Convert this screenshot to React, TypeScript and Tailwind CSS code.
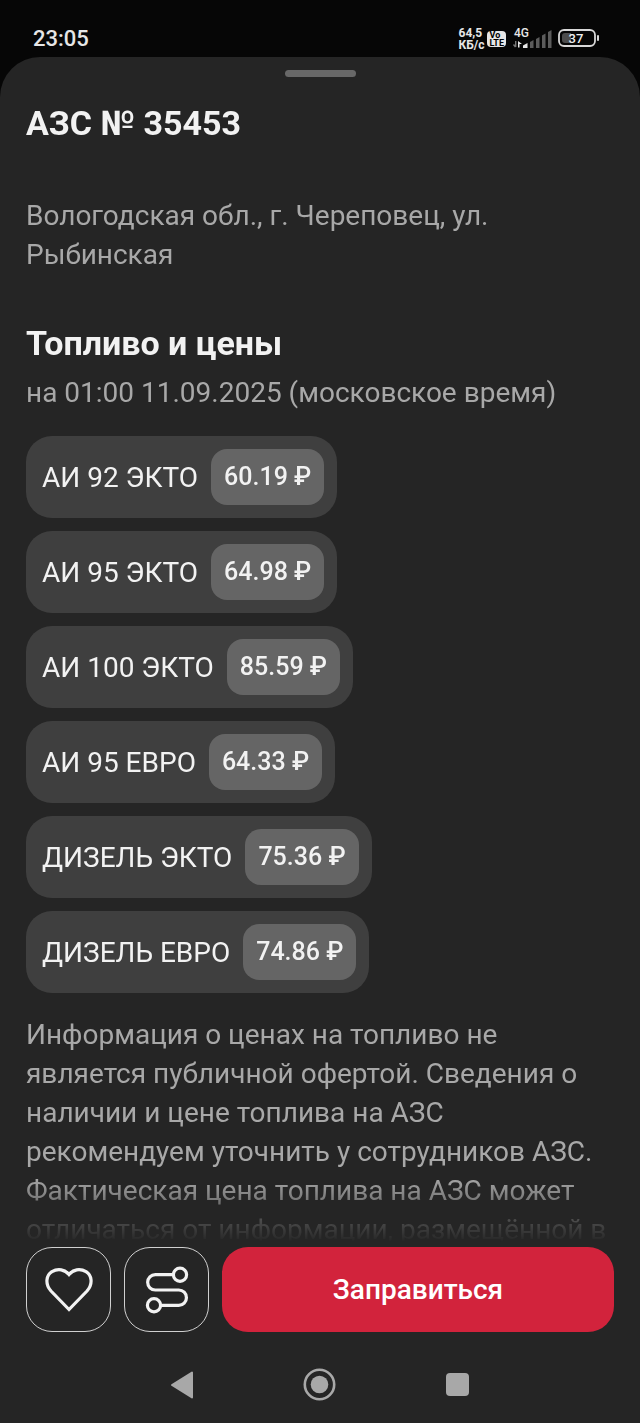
import { useState } from "react";

const fuels = [
  { name: "АИ 92 ЭКТО", price: "60.19" },
  { name: "АИ 95 ЭКТО", price: "64.98" },
  { name: "АИ 100 ЭКТО", price: "85.59" },
  { name: "АИ 95 ЕВРО", price: "64.33" },
  { name: "ДИЗЕЛЬ ЭКТО", price: "75.36" },
  { name: "ДИЗЕЛЬ ЕВРО", price: "74.86" },
];

function SignalIcon() {
  return (
    <svg width="40" height="24" viewBox="0 0 40 24" aria-hidden="true">
      <text x="2" y="10" fontSize="12" fontWeight="500" fill="#e6e6e6">
        4G
      </text>
      <path d="M3.700 14v6M1.500 17.500l2 2.500" fill="none" stroke="#777" strokeWidth="1.400" />
      <path d="M6 14v6.500h1.500v-3.500h2.500z" fill="#e6e6e6" />
      <path d="M11 21v-2.500l4.500-2.500v5z" fill="#e6e6e6" />
      <path
        d="M18 21v-6l3.500-2v8zM24 21v-9l3.500-2v11zM30 21v-12.500l3.500-2v14.500zM36 21v-16l3.500-2v18z"
        fill="#5c5c5c"
      />
    </svg>
  );
}

function BatteryIcon() {
  return (
    <svg width="42" height="20" viewBox="0 0 42 20" aria-hidden="true">
      <rect x="1" y="1" width="36" height="16" rx="5" fill="none" stroke="#d8d8d8" strokeWidth="1.800" />
      <path d="M13 4H7Q4 4 4 7v4q0 3 3 3h6z" fill="#4c4c4c" />
      <path d="M40 7v4" stroke="#d8d8d8" strokeWidth="2" strokeLinecap="round" />
      <text x="18" y="14" textAnchor="middle" fontSize="13" fontWeight="500" fill="#f0f0f0">
        37
      </text>
    </svg>
  );
}

function StatusBar() {
  return (
    <header className="flex h-[57px] shrink-0 items-center justify-between pt-5 pr-10 pl-[33px] text-[#e6e6e6]">
      <time className="text-[22px] leading-6 font-medium">23:05</time>
      <div className="flex items-center gap-[3px]">
        <div className="text-xs leading-3 font-bold">
          <span className="block">64,5</span>
          <span className="block">КБ/с</span>
        </div>
        <div className="rounded-sm bg-[#e6e6e6] px-[2px] text-[9px] leading-2 font-bold text-black">
          <span className="block">Vo</span>
          <span className="block">LTE</span>
        </div>
        <div className="mx-[3px]">
          <SignalIcon />
        </div>
        <BatteryIcon />
      </div>
    </header>
  );
}

function FuelChip({ name, price }: { name: string; price: string }) {
  return (
    <li className="flex w-fit items-center gap-[13px] rounded-[26px] bg-[#3f3f3f] py-[13px] pr-[13px] pl-4 text-[#f2f2f2]">
      <span className="text-[28px] leading-[39px]">{name}</span>
      <span className="rounded-2xl bg-[#656565] px-[13px] text-[25px] leading-[56px] font-medium">
        {price} ₽
      </span>
    </li>
  );
}

export default function App() {
  const [favorite, setFavorite] = useState(false);

  return (
    <div className="flex h-screen flex-col bg-[#060606] font-[Roboto,sans-serif]">
      <StatusBar />
      <div className="flex min-h-0 flex-1 flex-col rounded-t-[40px] bg-[#252525] pt-[13px]">
        <div className="mx-auto h-[7px] w-[71px] shrink-0 rounded-full bg-[#686868]" />

        <main className="min-h-0 flex-1 overflow-hidden px-[26px] pt-[26px] text-[28px] leading-[39px] text-[#a8a8a8] [mask-image:linear-gradient(to_bottom,black_calc(100%-64px),rgba(0,0,0,0.3)_calc(100%-22px),transparent)]">
          <h1 className="text-[34px] leading-10 font-bold text-[#f2f2f2]">АЗС № 35453</h1>
          <address className="mt-[53px] not-italic">
            Вологодская обл., г. Череповец, ул. Рыбинская
          </address>

          <h2 className="mt-[49px] text-[34px] leading-10 font-bold text-[#f2f2f2]">
            Топливо и цены
          </h2>
          <p className="mt-[10px]">на 01:00 11.09.2025 (московское время)</p>

          <ul className="mt-6 mb-[22px] space-y-[13px]">
            {fuels.map((fuel) => (
              <FuelChip key={fuel.name} name={fuel.name} price={fuel.price} />
            ))}
          </ul>

          <p>
            Информация о ценах на топливо не является публичной офертой. Сведения о
            наличии и цене топлива на АЗС рекомендуем уточнить у сотрудников АЗС.
            Фактическая цена топлива на АЗС может отличаться от информации,
            размещённой в
          </p>
        </main>

        <div className="flex shrink-0 gap-[13px] px-[26px] pt-[5px] pb-[14px]">
          <button
            className="grid size-[85px] place-items-center rounded-[26px] border border-[#d0d0d0] text-[#f2f2f2]"
            aria-label="В избранное"
            aria-pressed={favorite}
            onClick={() => setFavorite(!favorite)}
          >
            <svg width="48" height="44" viewBox="0 0 48 44" fill={favorite ? "currentColor" : "none"} stroke="currentColor" strokeWidth="3.200">
              <path d="M24 41.500 6 23C-.5 15.500 1.500 7 7 3.700 13 0 20 1.500 24 6.500 28 1.500 35 0 41 3.700 46.500 7 48.500 15.500 42 23z" />
            </svg>
          </button>
          <button
            className="grid size-[85px] place-items-center rounded-[26px] border border-[#d0d0d0] text-[#f2f2f2]"
            aria-label="Маршрут"
          >
            <svg width="44" height="48" viewBox="0 0 44 48" fill="none" stroke="currentColor" strokeWidth="3.200">
              <circle cx="35" cy="8.700" r="6.600" />
              <circle cx="9" cy="39.300" r="6.600" />
              <path d="M28.400 8.700H10.300a7.650 7.650 0 0 0 0 15.300h23.500a7.650 7.650 0 0 1 0 15.300H15.600" />
            </svg>
          </button>
          <button className="flex-1 rounded-[26px] bg-[#d2233c] text-[28px] font-medium text-white">
            Заправиться
          </button>
        </div>

        <nav className="flex h-[77px] shrink-0 items-center justify-center gap-[92px] text-[#a8a8a8]">
          <button className="grid w-[46px] place-items-center" aria-label="Назад">
            <svg width="24" height="28" viewBox="0 0 24 28" fill="currentColor" stroke="currentColor" strokeWidth="2" strokeLinejoin="round">
              <path d="M22 1.500v25L2 14z" />
            </svg>
          </button>
          <button className="grid w-[46px] place-items-center" aria-label="Домой">
            <svg width="34" height="34" viewBox="0 0 34 34">
              <circle cx="16.500" cy="16.500" r="14.700" fill="none" stroke="currentColor" strokeWidth="2.600" />
              <circle cx="16.500" cy="16.500" r="8.800" fill="currentColor" />
            </svg>
          </button>
          <button className="grid w-[46px] place-items-center" aria-label="Недавние">
            <svg width="24" height="24" viewBox="0 0 24 24">
              <rect width="23" height="23" rx="4" fill="currentColor" />
            </svg>
          </button>
        </nav>
      </div>
    </div>
  );
}
